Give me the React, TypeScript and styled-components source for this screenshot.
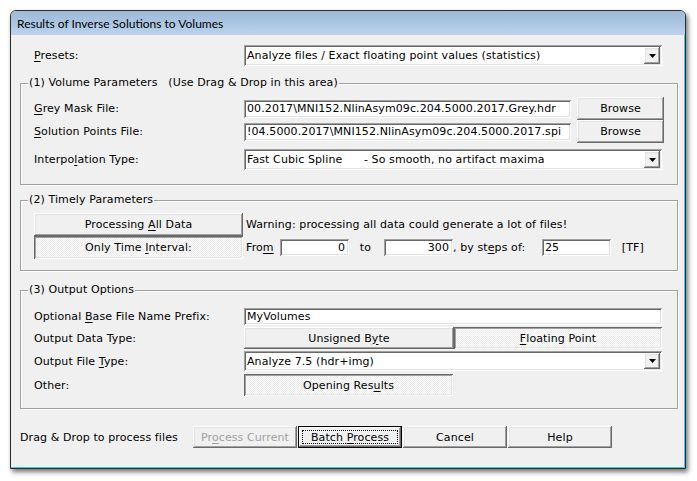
import React from "react";
import styled, { createGlobalStyle, css } from "styled-components";

const Global = createGlobalStyle`
  html, body { margin: 0; padding: 0; background: #ffffff; }
  body { font-family: "DejaVu Sans", Verdana, sans-serif; font-size: 11px; letter-spacing: 0.1px; color: #000; }
  * { box-sizing: border-box; }
`;

const Page = styled.div`
  padding: 10px 0 0 10px;
  width: 697px;
  height: 481px;
`;

const Window = styled.div`
  width: 676px;
  border: 1px solid #2e2e2e;
  border-radius: 6px 6px 0 0;
  background: #f0f0f0;
  box-shadow: 2px 3px 5px rgba(0, 0, 0, 0.55);
  display: flex;
  flex-direction: column;
`;

const TitleBar = styled.div`
  height: 24px;
  display: flex;
  align-items: center;
  padding-left: 6px;
  border-radius: 5px 5px 0 0;
  background: linear-gradient(#9ebad9 0%, #a9c4e1 45%, #bcd3eb 100%);
  font-family: Lato, "Liberation Sans", sans-serif;
  font-size: 12px;
  letter-spacing: 0;
  color: #000;
`;

const Client = styled.div`
  height: 433px;
  padding: 10px 6px 0 9px;
  border-right: 1px solid #3cc7ef;
  border-bottom: 1px solid #3cc7ef;
  display: flex;
  flex-direction: column;
`;

const Row = styled.div<{ $h?: number; $mt?: number; $pl?: number }>`
  display: flex;
  align-items: center;
  height: ${(p) => p.$h ?? 21}px;
  margin-top: ${(p) => p.$mt ?? 0}px;
  padding-left: ${(p) => p.$pl ?? 0}px;
  white-space: pre;
`;

const Label = styled.div<{ $w?: number }>`
  width: ${(p) => p.$w ?? 210}px;
  flex: none;
  white-space: pre;
`;

const U = styled.span`
  text-decoration: underline;
  text-underline-offset: 2px;
`;

const sunken = css`
  background: #fff;
  box-shadow: inset 1px 1px #a0a0a0, inset -1px -1px #ffffff,
    inset 2px 2px #696969, inset -2px -2px #e3e3e3;
`;

const raised = css`
  background: #f0f0f0;
  box-shadow: inset -1px -1px #696969, inset 1px 1px #ffffff,
    inset -2px -2px #a0a0a0, inset 2px 2px #e3e3e3;
`;

const pressed = css`
  background: repeating-conic-gradient(#ffffff 0 25%, #ececec 0 50%) 0 0 / 2px 2px;
  box-shadow: inset 1px 1px #696969, inset -1px -1px #ffffff,
    inset 2px 2px #a0a0a0, inset -2px -2px #e3e3e3;
`;

const SelectBox = styled.div<{ $w?: number; $h?: number }>`
  ${sunken};
  width: ${(p) => p.$w ?? 418}px;
  height: ${(p) => p.$h ?? 21}px;
  display: flex;
  align-items: center;
  padding: 0 2px 0 3px;
  flex: none;
`;

const SelectText = styled.div`
  flex: 1;
  white-space: pre;
  overflow: hidden;
`;

const ArrowBtn = styled.div`
  ${raised};
  width: 16px;
  height: calc(100% - 4px);
  display: flex;
  align-items: center;
  justify-content: center;
`;

const Field = styled.div<{ $w: number; $h?: number; $align?: string }>`
  ${sunken};
  width: ${(p) => p.$w}px;
  height: ${(p) => p.$h ?? 18}px;
  flex: none;
  display: flex;
  align-items: center;
  justify-content: ${(p) => (p.$align === "right" ? "flex-end" : "flex-start")};
  padding: 0 4px 0 3px;
  white-space: pre;
  overflow: hidden;
`;

const Button = styled.div<{ $w: number; $h?: number; $down?: boolean; $disabled?: boolean; $default?: boolean }>`
  ${(p) => (p.$down ? pressed : raised)};
  width: ${(p) => p.$w}px;
  height: ${(p) => p.$h ?? 22}px;
  flex: none;
  display: flex;
  align-items: center;
  justify-content: center;
  color: ${(p) => (p.$disabled ? "#a0a0a0" : "#000")};
  position: relative;
  white-space: pre;
  ${(p) =>
    p.$default &&
    css`
      box-shadow: inset 0 0 0 1px #000, inset -2px -2px #696969, inset 2px 2px #ffffff,
        inset -3px -3px #a0a0a0;
    `}
`;

const FocusRing = styled.span`
  position: absolute;
  inset: 4px;
  border: 1px dotted #000;
  pointer-events: none;
`;

const Group = styled.div<{ $mt: number; $pt: number; $pb: number }>`
  position: relative;
  margin-top: ${(p) => p.$mt}px;
  border: 1px solid #a0a0a0;
  box-shadow: inset 1px 1px #ffffff, 1px 1px #ffffff;
  padding: ${(p) => p.$pt}px 14px ${(p) => p.$pb}px 13px;
  display: flex;
  flex-direction: column;
`;

const Legend = styled.div`
  position: absolute;
  top: -8px;
  left: 7px;
  padding: 0 1px;
  background: #f0f0f0;
  white-space: pre;
  line-height: 14px;
`;

const FileCtrl = styled.div`
  display: flex;
  align-items: center;
  gap: 6px;
`;

const Inline = styled.div<{ $w?: number }>`
  white-space: pre;
  ${(p) => (p.$w ? `width: ${p.$w}px; flex: none;` : "")}
`;

const ButtonStack = styled.div`
  display: flex;
  flex-direction: column;
`;

const Footer = styled.div`
  margin-top: 17px;
  height: 22px;
  display: flex;
  align-items: center;
`;

const FooterButtons = styled.div`
  display: flex;
  gap: 1px;
`;

const Arrow = () => (
  <svg width="7" height="4" viewBox="0 0 7 4">
    <path d="M0 0h7L3.5 4z" fill="#000" />
  </svg>
);

const Select = ({ text, h }: { text: string; h?: number }) => (
  <SelectBox $h={h}>
    <SelectText>{text}</SelectText>
    <ArrowBtn>
      <Arrow />
    </ArrowBtn>
  </SelectBox>
);

export default function App() {
  return (
    <Page>
      <Global />
      <Window>
        <TitleBar>Results of Inverse Solutions to Volumes</TitleBar>
        <Client>
          <Row $pl={14}>
            <Label>
              <U>P</U>resets:
            </Label>
            <Select text="Analyze files / Exact floating point values (statistics)" />
          </Row>

          <Group $mt={17} $pt={13} $pb={14}>
            <Legend>(1) Volume Parameters   (Use Drag &amp; Drop in this area)</Legend>
            <Row $h={23}>
              <Label>
                <span><U>G</U>rey Mask File:</span>
              </Label>
              <FileCtrl>
                <Field $w={327}>00.2017\MNI152.NlinAsym09c.204.5000.2017.Grey.hdr</Field>
                <Button $w={87} $h={23}>Browse</Button>
              </FileCtrl>
            </Row>
            <Row $h={23}>
              <Label>
                <span><U>S</U>olution Points File:</span>
              </Label>
              <FileCtrl>
                <Field $w={327}>!04.5000.2017\MNI152.NlinAsym09c.204.5000.2017.spi</Field>
                <Button $w={87} $h={23}>Browse</Button>
              </FileCtrl>
            </Row>
            <Row $h={21} $mt={6}>
              <Label>
                <span>Interpo<U>l</U>ation Type:</span>
              </Label>
              <Select text={"Fast Cubic Spline      - So smooth, no artifact maxima"} />
            </Row>
          </Group>

          <Group $mt={15} $pt={12} $pb={11}>
            <Legend>(2) Timely Parameters</Legend>
            <Row $h={46}>
              <ButtonStack>
                <Button $w={209} $h={23}>
                  <span>Processing <U>A</U>ll Data</span>
                </Button>
                <Button $w={209} $h={23} $down>
                  <span>Only Time <U>I</U>nterval:</span>
                </Button>
              </ButtonStack>
              <ButtonStack>
                <Row $h={23} $pl={3}>
                  Warning: processing all data could generate a lot of files!
                </Row>
                <Row $h={23} $pl={3}>
                  <Inline $w={34}>
                    <span>Fro<U>m</U></span>
                  </Inline>
                  <Field $w={69} $h={17} $align="right">0</Field>
                  <Inline $w={35}>{"   to"}</Inline>
                  <Field $w={69} $h={17} $align="right">300</Field>
                  <Inline $w={89}>
                    <span>, by st<U>e</U>ps of:</span>
                  </Inline>
                  <Field $w={69} $h={17}>25</Field>
                  <Inline>{"   [TF]"}</Inline>
                </Row>
              </ButtonStack>
            </Row>
          </Group>

          <Group $mt={19} $pt={17} $pb={12}>
            <Legend>(3) Output Options</Legend>
            <Row $h={17}>
              <Label>
                <span>Optional <U>B</U>ase File Name Prefix:</span>
              </Label>
              <Field $w={418} $h={17}>MyVolumes</Field>
            </Row>
            <Row $h={22} $mt={2}>
              <Label>Output Data Type:</Label>
              <Button $w={210}>
                <span>Unsigned B<U>y</U>te</span>
              </Button>
              <Button $w={208} $down>
                <span><U>F</U>loating Point</span>
              </Button>
            </Row>
            <Row $h={20} $mt={2}>
              <Label>
                <span>Output File <U>T</U>ype:</span>
              </Label>
              <Select text="Analyze 7.5 (hdr+img)" h={20} />
            </Row>
            <Row $h={22} $mt={3}>
              <Label>Other:</Label>
              <Button $w={209} $down>
                <span>Opening Res<U>u</U>lts</span>
              </Button>
            </Row>
          </Group>

          <Footer>
            <Label $w={173}>Drag &amp; Drop to process files</Label>
            <FooterButtons>
              <Button $w={104} $disabled>
                <span>Pr<U>o</U>cess Current</span>
              </Button>
              <Button $w={104} $default>
                <span>Batch <U>P</U>rocess</span>
                <FocusRing />
              </Button>
              <Button $w={104}>Cancel</Button>
              <Button $w={104}>Help</Button>
            </FooterButtons>
          </Footer>
        </Client>
      </Window>
    </Page>
  );
}
